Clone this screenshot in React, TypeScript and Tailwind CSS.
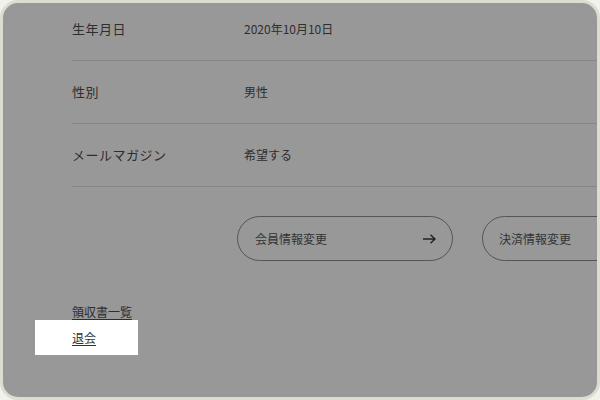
import React from "react";

const font = { fontFamily: '"Noto Sans CJK JP", "Noto Sans", sans-serif' };

function Row({ label, value }: { label: string; value: string }) {
  return (
    <div className="flex h-[63px] items-center border-b border-[#858585]">
      <div className="w-[172px] text-[13px] tracking-[0.5px] text-[#2e2e2e]">{label}</div>
      <div className="text-[12px] text-[#2e2e2e]">{value}</div>
    </div>
  );
}

function Arrow() {
  return (
    <svg width="13" height="10" viewBox="0 0 13 10" fill="none" stroke="#222" strokeWidth="1.4">
      <path d="M0 5h12M7.5 0.8L12 5l-4.5 4.2" />
    </svg>
  );
}

export default function App() {
  return (
    <div className="w-[600px] h-[400px] bg-[#f2f2ec]" style={font}>
      <div className="w-[600px] h-[400px] rounded-[18px] border-[3px] border-[#dcdcd0] bg-[#989898] overflow-hidden">
        <div className="pl-[69px] mt-[-5px]">
          <Row label="生年月日" value="2020年10月10日" />
          <Row label="性別" value="男性" />
          <Row label="メールマガジン" value="希望する" />
        </div>
        <div className="flex gap-[29px] pl-[234px] mt-[29px] whitespace-nowrap">
          <div className="flex h-[45px] w-[216px] shrink-0 items-center justify-between rounded-full border border-[#555] pl-[17px] pr-[16px] text-[12px] text-[#333]">
            <span>会員情報変更</span>
            <Arrow />
          </div>
          <div className="flex h-[45px] w-[216px] shrink-0 items-center rounded-full border border-[#555] pl-[16px] text-[12px] text-[#333]">
            <span>決済情報変更</span>
          </div>
        </div>
        <div className="pl-[69px] mt-[43px] h-[15px] flex items-center">
          <span className="text-[12px] leading-[15px] text-[#2e2e2e] underline underline-offset-2">領収書一覧</span>
        </div>
        <div className="ml-[32px] mt-[1px] h-[35px] w-[103px] bg-white pl-[37px] flex items-center">
          <span className="text-[12px] text-[#333] underline underline-offset-2">退会</span>
        </div>
      </div>
    </div>
  );
}
